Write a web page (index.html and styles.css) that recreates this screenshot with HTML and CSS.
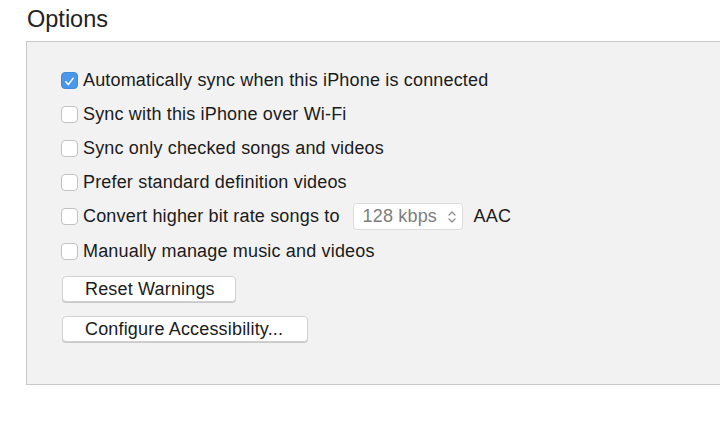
FILE: index.html
```html
<!DOCTYPE html>
<html>
<head>
<meta charset="utf-8">
<link rel="stylesheet" href="styles.css">
</head>
<body>
<h1 class="title">Options</h1>
<div class="panel">
  <div class="row"><span class="cb checked"><svg viewBox="0 0 17 17" width="17" height="17"><path d="M4.3 8.8 L7.2 12 L12.6 4.8" fill="none" stroke="#fff" stroke-width="1.7" stroke-linecap="round" stroke-linejoin="round"/></svg></span><span class="label">Automatically sync when this iPhone is connected</span></div>
  <div class="row"><span class="cb"></span><span class="label">Sync with this iPhone over Wi-Fi</span></div>
  <div class="row"><span class="cb"></span><span class="label">Sync only checked songs and videos</span></div>
  <div class="row"><span class="cb"></span><span class="label">Prefer standard definition videos</span></div>
  <div class="row"><span class="cb"></span><span class="label">Convert higher bit rate songs to</span><span class="popup"><span class="popup-text">128 kbps</span><svg class="arrows" viewBox="0 0 10 16" width="10" height="16"><path d="M2 6 L5 3 L8 6 M2 10 L5 13 L8 10" fill="none" stroke="#8a8a8a" stroke-width="1.2" stroke-linecap="round" stroke-linejoin="round"/></svg></span><span class="label aac">AAC</span></div>
  <div class="row"><span class="cb"></span><span class="label">Manually manage music and videos</span></div>
  <div class="buttons">
    <button class="btn btn-reset">Reset Warnings</button>
    <button class="btn btn-config">Configure Accessibility...</button>
  </div>
</div>
</body>
</html>
```
FILE: styles.css
```css
html, body {
  margin: 0;
  padding: 0;
  background: #fff;
}
body {
  font-family: "Liberation Sans", Arial, sans-serif;
  color: #1a1a1a;
  width: 720px;
  height: 422px;
  overflow: hidden;
}
.title {
  margin: 0;
  padding: 4px 0 0 27px;
  height: 37px;
  font-weight: normal;
  font-size: 23.5px;
  line-height: 30px;
  color: #222;
}
.panel {
  margin-left: 26px;
  width: 720px;
  height: 344px;
  box-sizing: border-box;
  background: #f2f2f2;
  border: 1px solid #c9c9c9;
  border-right: none;
  padding: 21px 0 0 34px;
}
.row {
  display: flex;
  align-items: center;
  height: 34.2px;
}
.cb {
  width: 17px;
  height: 17px;
  box-sizing: border-box;
  border: 1px solid #c2c2c2;
  border-radius: 4px;
  background: #fff;
  flex: none;
  display: flex;
}
.cb.checked {
  background: #4a97ea;
  border-color: #3f89df;
}
.label {
  margin-left: 5px;
  font-size: 18px;
  letter-spacing: 0.17px;
  color: #1b1b1b;
  white-space: nowrap;
}
.popup {
  margin-left: 13px;
  width: 110px;
  height: 27px;
  box-sizing: border-box;
  border: 1px solid #dcdcdc;
  border-radius: 4px;
  background: #fff;
  display: flex;
  align-items: center;
  padding-left: 9px;
}
.popup-text {
  font-size: 18px;
  letter-spacing: 0.17px;
  color: #7d7d7d;
  flex: 1;
}
.arrows {
  margin-right: 5px;
}
.aac {
  margin-left: 11px;
}
.buttons {
  display: flex;
  flex-direction: column;
  align-items: flex-start;
  gap: 14px;
  padding-top: 8px;
}
.btn {
  font-family: "Liberation Sans", Arial, sans-serif;
  font-size: 18px;
  letter-spacing: 0.17px;
  color: #1b1b1b;
  background: #fff;
  border: 1px solid #d2d2d2;
  border-radius: 4px;
  height: 26px;
  margin-left: 1px;
  padding: 0 0 0 22px;
  text-align: left;
  box-shadow: 0 1px 0 #c8c8c8;
}
.btn-reset { width: 174px; }
.btn-config { width: 246px; }
```
